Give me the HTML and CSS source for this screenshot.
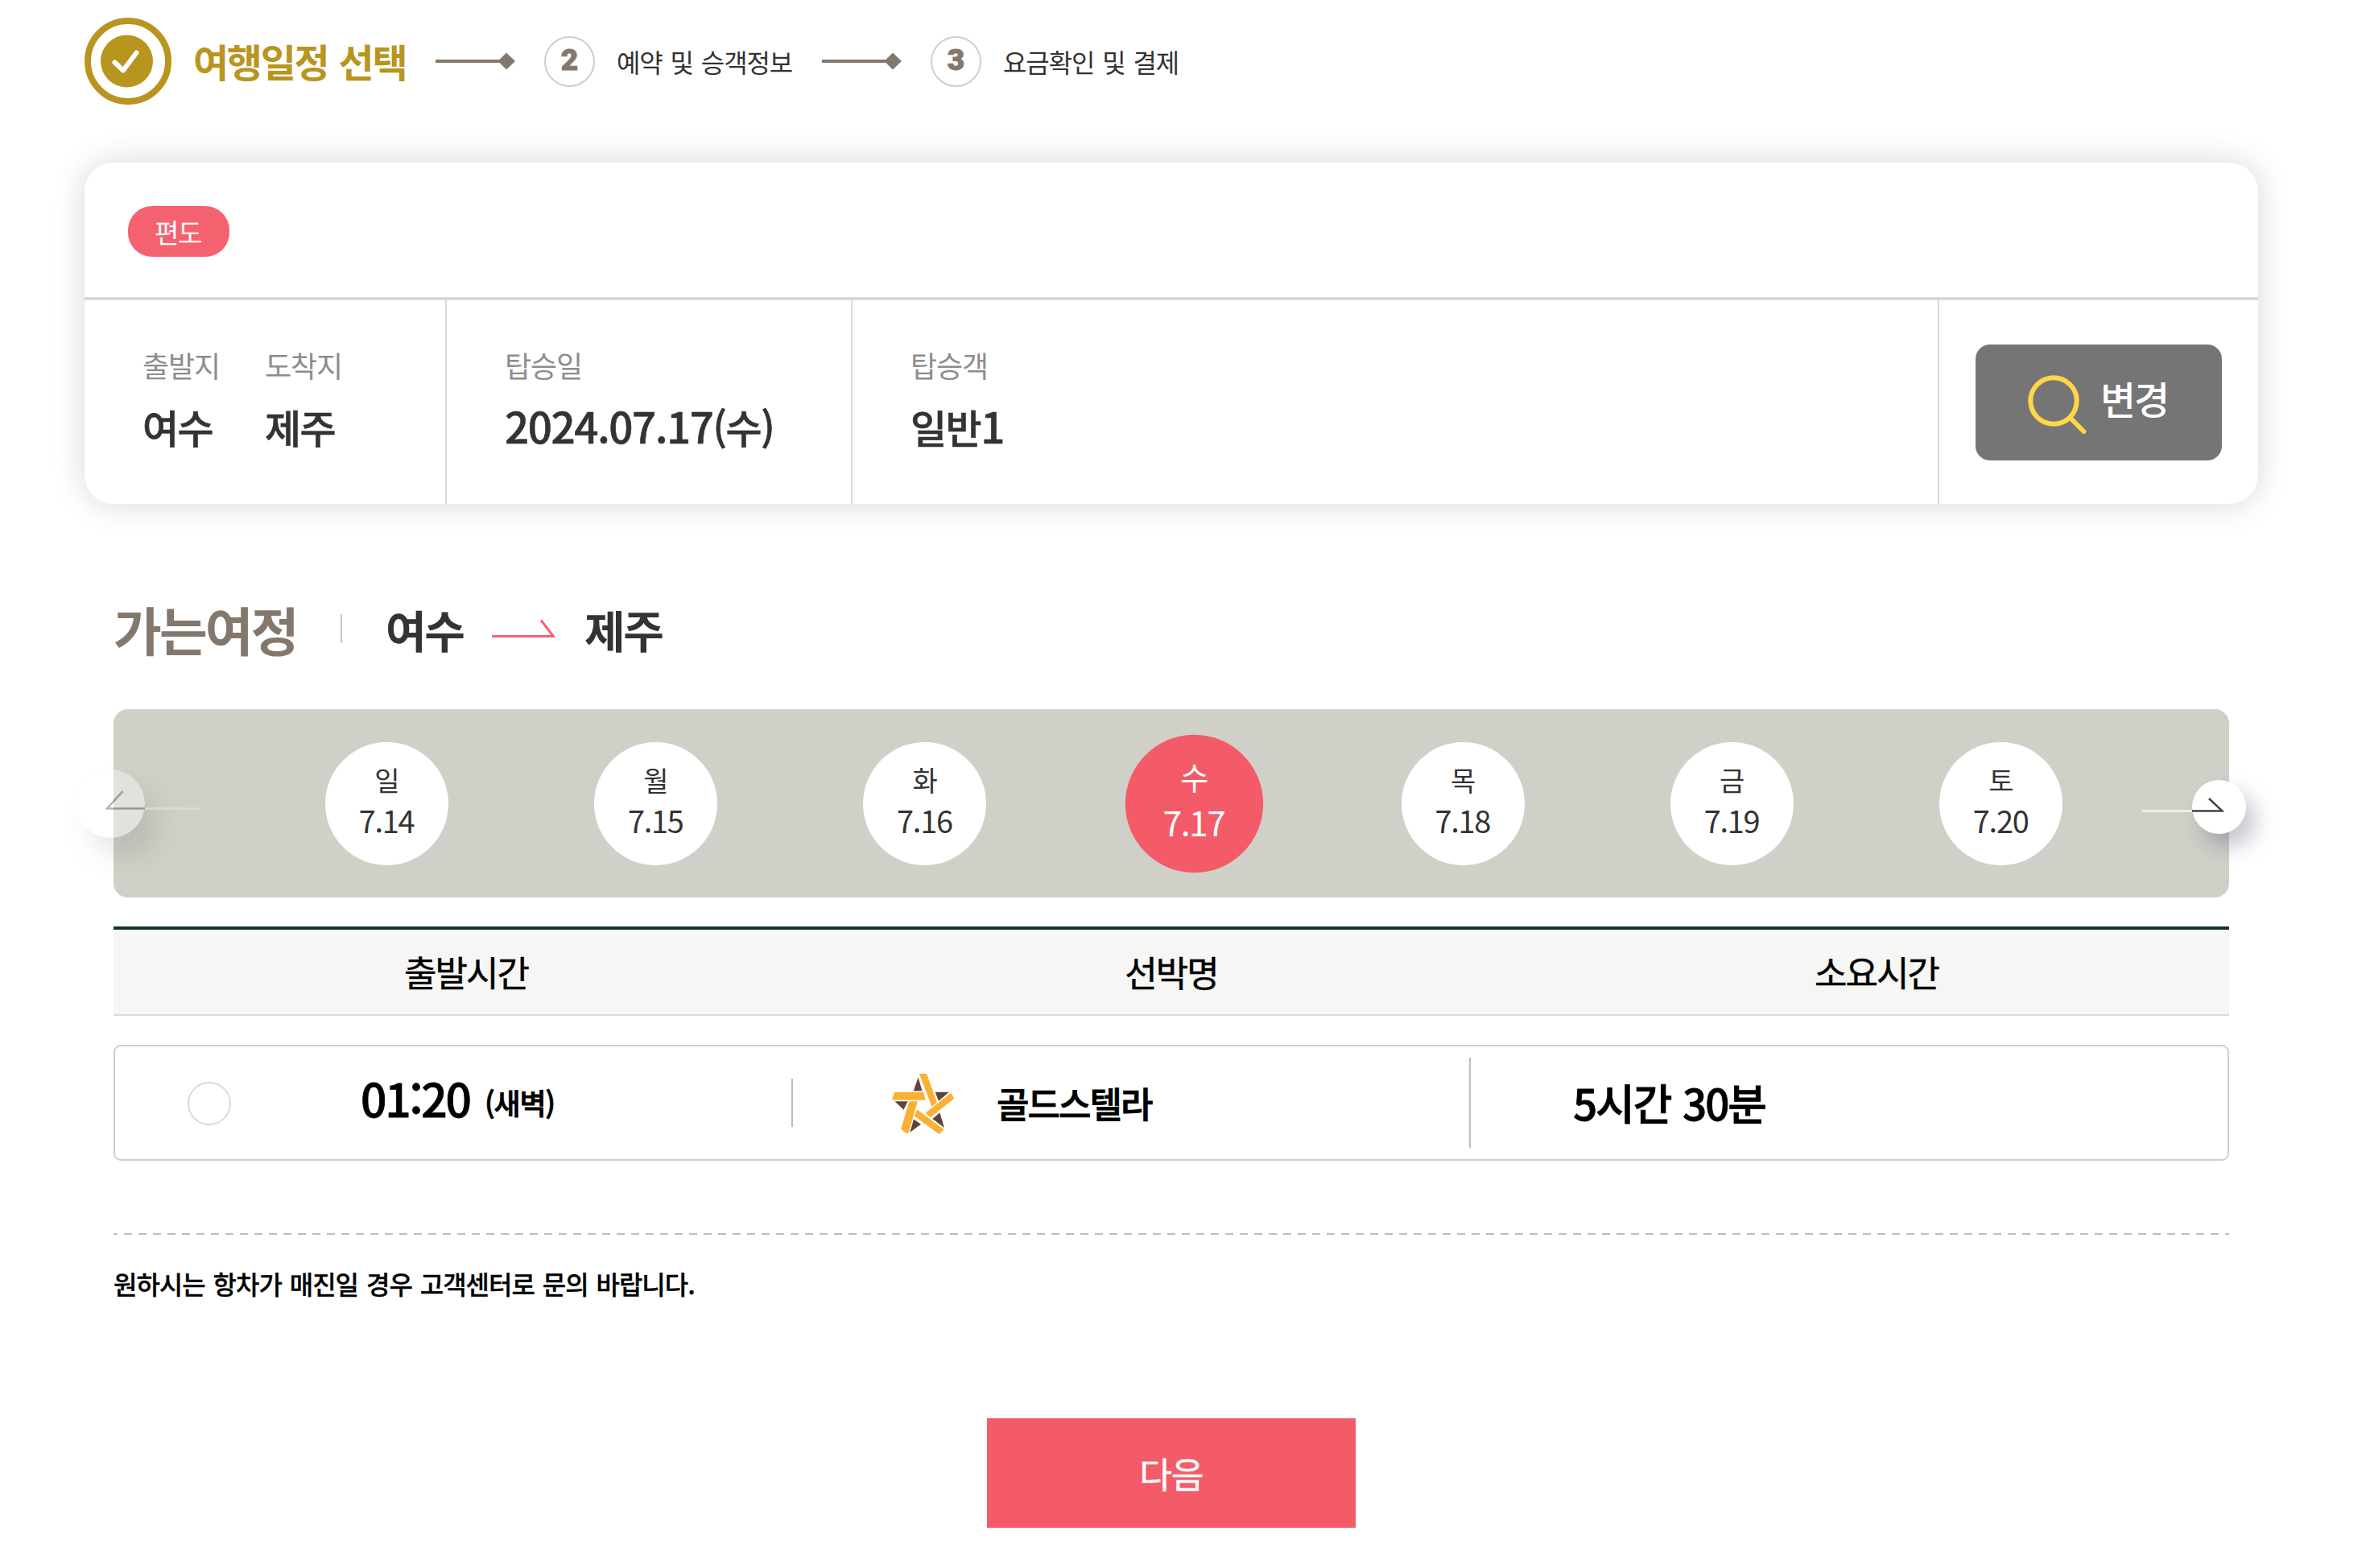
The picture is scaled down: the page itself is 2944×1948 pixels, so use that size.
FILE: index.html
```html
<!DOCTYPE html>
<html lang="ko">

<head>
    <meta charset="UTF-8">
    <meta name="viewport" content="width=device-width, initial-scale=1.0">
    <title>여행일정 선택</title>
    <link rel="stylesheet" href="styles.css">
</head>

<body>
    <div class="page">
        <ol class="steps">
            <li class="step on">
                <svg class="check" viewBox="0 0 108 108">
                    <circle cx="54" cy="54" r="50" fill="#fff" stroke="#b8951f" stroke-width="8" />
                    <circle cx="52.500" cy="54" r="32.500" fill="#b8951f" />
                    <path d="M37.500 55.500 L48 65.500 L64.500 43.500" fill="none" stroke="#fff" stroke-width="6" stroke-linecap="round" stroke-linejoin="round" />
                </svg>
                <span class="step-name">여행일정 선택</span>
            </li>
            <li class="step">
                <svg class="link" viewBox="0 0 99 22">
                    <path d="M0 11 H86" stroke="#84786d" stroke-width="4" />
                    <path d="M88 0.500 L99 11 L88 21.500 L77.500 11 Z" fill="#84786d" />
                </svg>
                <span class="num">2</span>
                <span class="step-name">예약 및 승객정보</span>
            </li>
            <li class="step">
                <svg class="link" viewBox="0 0 99 22">
                    <path d="M0 11 H86" stroke="#84786d" stroke-width="4" />
                    <path d="M88 0.500 L99 11 L88 21.500 L77.500 11 Z" fill="#84786d" />
                </svg>
                <span class="num">3</span>
                <span class="step-name">요금확인 및 결제</span>
            </li>
        </ol>

        <section class="search">
            <div class="search-top"><span class="badge">편도</span></div>
            <div class="search-info">
                <div class="cell route">
                    <dl class="from">
                        <dt>출발지</dt>
                        <dd>여수</dd>
                    </dl>
                    <dl>
                        <dt>도착지</dt>
                        <dd>제주</dd>
                    </dl>
                </div>
                <div class="cell day">
                    <dl>
                        <dt>탑승일</dt>
                        <dd><span class="date">2024.07.17</span>(수)</dd>
                    </dl>
                </div>
                <div class="cell guest">
                    <dl>
                        <dt>탑승객</dt>
                        <dd>일반<span class="date">1</span></dd>
                    </dl>
                </div>
                <div class="cell change">
                    <button type="button" class="btn-change">
                        <svg class="glass" viewBox="0 0 74 74">
                            <circle cx="32" cy="32" r="28.700" />
                            <path d="M53 53.500 L69.500 70" />
                        </svg>
                        <span>변경</span>
                    </button>
                </div>
            </div>
        </section>

        <section class="trip">
            <h2 class="trip-title">
                <span class="way">가는여정</span>
                <span class="port">여수</span>
                <svg class="arrow" viewBox="0 0 78 24">
                    <path d="M0 21.500 H76.500 L61 1.500" />
                </svg>
                <span class="port">제주</span>
            </h2>

            <div class="calendar">
                <a class="move prev">
                    <span class="ball"></span>
                    <svg viewBox="0 0 118 24">
                        <path class="light" d="M49 22.500 H118" />
                        <path class="dark" d="M49 22.500 H2 L21.500 1" />
                    </svg>
                </a>
                <ul class="days">
                    <li><span>일</span><b>7.14</b></li>
                    <li><span>월</span><b>7.15</b></li>
                    <li><span>화</span><b>7.16</b></li>
                    <li class="on"><span>수</span><b>7.17</b></li>
                    <li><span>목</span><b>7.18</b></li>
                    <li><span>금</span><b>7.19</b></li>
                    <li><span>토</span><b>7.20</b></li>
                </ul>
                <a class="move next">
                    <span class="ball"></span>
                    <svg viewBox="0 0 102 18">
                        <path class="light" d="M0 16.500 H62" />
                        <path class="dark" d="M62 16.500 H99.500 L83 1" />
                    </svg>
                </a>
            </div>

            <div class="list-head">
                <span>출발시간</span>
                <span>선박명</span>
                <span>소요시간</span>
            </div>

            <label class="ship">
                <span class="radio"></span>
                <span class="time">01:20</span>
                <span class="dawn">(새벽)</span>
                <span class="bar short"></span>
                <svg class="star" viewBox="0 0 77 75">
                    <g fill="#5f4339">
                        <path d="M32.600 4.500 L37.500 21.300 L26.800 21.300 Z" />
                        <path d="M53.600 22.700 L71 22.700 L58 33.800 Z" />
                        <path d="M3.500 34.300 L19.600 34.300 L14.500 44.800 Z" />
                        <path d="M59.400 48.300 L64.900 67 L50.400 56 Z" />
                        <path d="M27 56.500 L36 62.700 L22.300 72.700 Z" />
                    </g>
                    <g fill="#fbb034">
                        <path d="M33.900 0 L43.200 0 L55.800 35.300 L49.500 41 Z" />
                        <path d="M3 22.700 L39 22.700 L41.800 32.700 L0 32.700 Z" />
                        <path d="M73.500 23.500 L77 31 L47.800 54.300 L41.500 48.700 Z" />
                        <path d="M31 44.300 L64.700 69.300 L58.500 75 L28 52.700 Z" />
                        <path d="M21.400 34.300 L31.700 34.300 L21 72.700 L17.900 74.300 L11 68.700 Z" />
                    </g>
                </svg>
                <span class="ship-name">골드스텔라</span>
                <span class="bar long"></span>
                <span class="take">5시간 30분</span>
            </label>

            <p class="note">원하시는 항차가 매진일 경우 고객센터로 문의 바랍니다.</p>
        </section>

        <button type="button" class="btn-next">다음</button>
    </div>
</body>

</html>
```
FILE: styles.css
```css
* {
    box-sizing: border-box;
    margin: 0;
    padding: 0;
    letter-spacing: -0.045em;
}

body {
    background-color: #fff;
    color: #333;
    font-family: "Noto Sans CJK KR", sans-serif;
    word-spacing: 2px;
}

svg {
    display: block;
    flex: none;
}

button {
    border: none;
    font-family: inherit;
    color: #fff;
}

.page {
    width: 2910px;
    padding: 0 105px;
}

/* steps */
.steps {
    display: flex;
    height: 152px;
    list-style: none;
}

.step {
    display: flex;
    align-items: center;
    white-space: nowrap;
    font-size: 32px;
    line-height: 48px;
}

.step-name {
    letter-spacing: -0.034em;
}

.step.on {
    width: 436px;
    color: #b8951f;
    font-size: 48px;
    font-weight: bold;
}

.step.on .step-name {
    margin-top: -2px;
    letter-spacing: -0.048em;
    word-spacing: 2px;
}

.step:nth-child(2) {
    width: 480px;
}

.check {
    width: 108px;
    height: 108px;
    margin-right: 27px;
}

.link {
    width: 99px;
    height: 22px;
    margin-right: 36px;
}

.num {
    flex: none;
    width: 63px;
    height: 63px;
    margin-right: 27px;
    border: 2px solid #cfcfc7;
    border-radius: 50%;
    color: #84786d;
    font-family: Roboto, sans-serif;
    font-size: 37px;
    font-weight: 900;
    letter-spacing: 0;
    line-height: 55px;
    text-align: center;
    -webkit-text-stroke: 1px #84786d;
}

/* search box */
.search {
    width: 2700px;
    height: 424px;
    margin-top: 50px;
    border-radius: 36px;
    box-shadow: 0 0 40px rgba(0, 0, 0, 0.16);
}

.search-top {
    height: 171px;
    padding: 54px;
    border-bottom: 4px solid #d9d9d9;
}

.badge {
    display: block;
    width: 126px;
    height: 63px;
    padding-right: 2px;
    border-radius: 30px;
    background-color: #f5626f;
    color: #fff;
    font-size: 33px;
    line-height: 65px;
    text-align: center;
}

.search-info {
    display: flex;
    height: 253px;
}

.cell {
    display: flex;
    padding: 55px 0 0 72px;
    border-right: 2px solid #d9d9d9;
}

.route {
    width: 450px;
}

.from {
    width: 152px;
}

.day {
    width: 504px;
}

.guest {
    width: 1350px;
}

.change {
    padding: 55px 0 0 45px;
    border-right: none;
}

dt {
    color: #8d8d8d;
    font-size: 36px;
    line-height: 50px;
    letter-spacing: -0.03em;
}

dd {
    margin-top: 16px;
    font-size: 49px;
    font-weight: 500;
    line-height: 72px;
    letter-spacing: -0.03em;
    white-space: nowrap;
    -webkit-text-stroke: 0.600px #333;
}

.date {
    font-size: 53px;
    letter-spacing: -0.028em;
    line-height: 1;
}

.btn-change {
    display: flex;
    width: 306px;
    height: 144px;
    padding: 38px 0 0 65px;
    border-radius: 18px;
    background-color: #757575;
    font-size: 48px;
    font-weight: 500;
    line-height: 57px;
}

.glass {
    width: 74px;
    height: 74px;
    margin-right: 16px;
    fill: none;
    stroke: #ffd64a;
    stroke-width: 6;
    stroke-linecap: round;
}

/* trip */
.trip {
    width: 2628px;
    margin: 0 36px;
}

.trip-title {
    display: flex;
    align-items: center;
    height: 90px;
    margin-top: 110px;
    white-space: nowrap;
}

.way {
    width: 284px;
    color: #84786d;
    font-size: 65px;
    line-height: 86px;
    background: linear-gradient(#c8c8c8, #c8c8c8) right center / 2px 36px no-repeat;
}

.way + .port {
    margin-left: 54px;
}

.port {
    width: 94px;
    font-size: 55px;
    line-height: 88px;
}

.arrow {
    width: 78px;
    height: 24px;
    margin: 0 37px 0 38px;
    fill: none;
    stroke: #f9606f;
    stroke-width: 3;
}

.calendar {
    position: relative;
    height: 234px;
    margin-top: 55px;
    border-radius: 18px;
    background-color: #d0d0c8;
}

.days {
    display: flex;
    gap: 181.200px;
    height: 234px;
    align-items: center;
    padding-left: 263px;
    list-style: none;
}

.days li {
    flex: none;
    width: 153px;
    height: 153px;
    padding: 19px 1px 0 0;
    border-radius: 50%;
    background-color: #fff;
    text-align: center;
    font-size: 34px;
}

.days span,
.days b {
    display: block;
    line-height: 56px;
}

.days b {
    margin-top: -6px;
    font-size: 38px;
    font-weight: normal;
    letter-spacing: -0.035em;
}

.days .on {
    background-color: #f35b69;
    color: #fff;
    transform: scale(1.12);
}

.move {
    position: absolute;
}

.move svg,
.ball {
    position: absolute;
}

.ball {
    border-radius: 50%;
    background-color: #fff;
    box-shadow: 12px 16px 26px rgba(40, 45, 80, 0.27);
}

.prev {
    left: -46px;
    top: 75px;
    opacity: 0.38;
}

.prev .ball {
    width: 85px;
    height: 85px;
    box-shadow: 18px 24px 30px rgba(40, 40, 40, 0.28);
}

.prev svg {
    left: 36px;
    top: 26px;
    width: 118px;
}

.next {
    left: 2582px;
    top: 88px;
}

.next .ball {
    width: 67px;
    height: 67px;
}

.next svg {
    left: -62px;
    top: 22px;
    width: 102px;
}

.move path {
    fill: none;
    stroke-width: 2.500;
}

.light {
    stroke: #f2f2ee;
}

.dark {
    stroke: #444;
}

.list-head {
    display: flex;
    height: 111px;
    margin-top: 36px;
    border-top: 4px solid #15322a;
    border-bottom: 2px solid #dcdcd6;
    background-color: #f6f6f4;
    color: #000;
    font-size: 44px;
    line-height: 105px;
    -webkit-text-stroke: 0.500px #000;
}

.list-head span {
    flex: 1;
    text-align: center;
}

.ship {
    display: flex;
    align-items: center;
    height: 144px;
    margin-top: 36px;
    padding-left: 90px;
    border: 2px solid #cfcfc7;
    border-radius: 9px;
    color: #000;
    font-weight: 500;
    white-space: nowrap;
    -webkit-text-stroke: 0.800px #000;
}

.radio {
    width: 54px;
    height: 54px;
    margin-top: 2px;
    border: 2px solid #d9d9d9;
    border-radius: 50%;
}

.time {
    width: 154px;
    margin: -15px 0 0 161px;
    font-size: 57px;
    line-height: 80px;
    letter-spacing: -0.04em;
}

.dawn {
    width: 381px;
    margin-top: -2px;
    font-size: 36px;
    letter-spacing: -0.035em;
}

.bar {
    width: 2px;
    background-color: #bdbdbd;
}

.short {
    height: 60px;
}

.long {
    height: 112px;
}

.star {
    width: 77px;
    height: 75px;
    margin: 3px 53px 0 123px;
}

.ship-name {
    width: 587px;
    font-size: 44px;
}

.take {
    margin: -2px 0 0 127px;
    font-size: 53px;
    letter-spacing: -0.04em;
}

.note {
    margin-top: 90px;
    padding-top: 38px;
    background: repeating-linear-gradient(90deg, #bdbdbd 0 5px, transparent 5px 13px, #bdbdbd 13px 18px) left top / 100% 2px no-repeat;
    color: #000;
    font-size: 32px;
    font-weight: 500;
    letter-spacing: -0.032em;
    line-height: 48px;
    -webkit-text-stroke: 0.300px #000;
}

.btn-next {
    display: block;
    width: 458px;
    height: 136px;
    margin: 144px auto 50px;
    background-color: #f35b69;
    font-size: 44px;
    letter-spacing: -0.02em;
    line-height: 136px;
    -webkit-text-stroke: 0.500px #fff;
}
```
